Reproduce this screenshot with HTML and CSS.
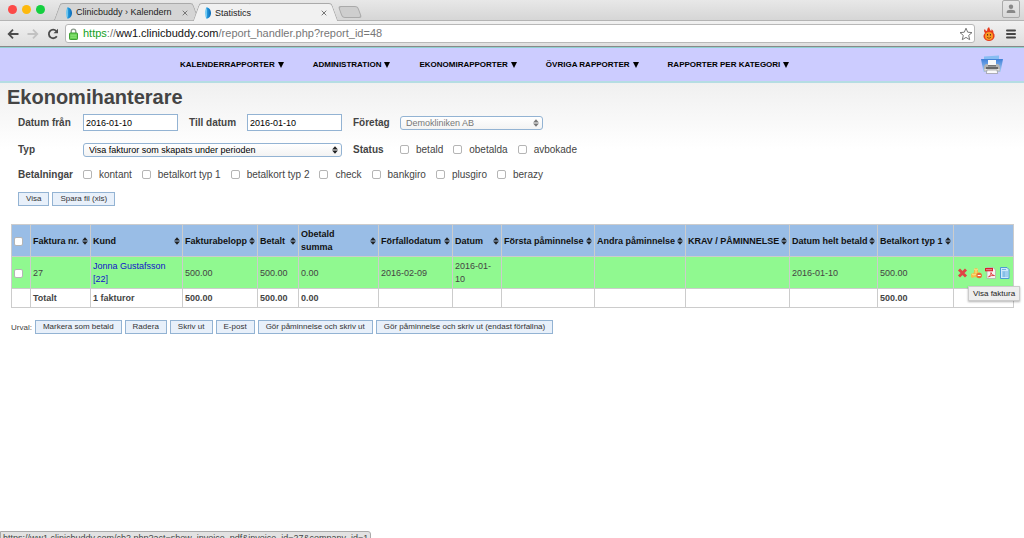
FILE: index.html
```html
<!DOCTYPE html>
<html lang="sv">
<head>
<meta charset="utf-8">
<title>Statistics</title>
<link rel="stylesheet" href="styles.css">
</head>
<body>
<svg class="defs" width="0" height="0" aria-hidden="true">
  <defs>
    <linearGradient id="drop" x1="0" x2="1"><stop offset="0" stop-color="#2aa9ea"/><stop offset="1" stop-color="#0a66b4"/></linearGradient>
    <linearGradient id="tray" x1="0" x2="0" y1="0" y2="1"><stop offset="0" stop-color="#3f80d8"/><stop offset="1" stop-color="#a9cdf5"/></linearGradient>
    <symbol id="brand" viewBox="0 0 6 12"><path d="M1 0.5C4 0 6 3 6 6S4 12 1 11.5C2 8 2 4 1 .5Z" fill="url(#drop)"/><path d="M1 1Q-.6 6 1 11Q2.600 6 1 1Z" fill="#5cc4f4"/></symbol>
    <symbol id="sort" viewBox="0 0 6 8"><path d="M3 .2L5.900 3.500H.1ZM3 7.800L.1 4.500H5.900Z" fill="#222"/></symbol>
  </defs>
</svg>
<header class="browser">
  <div class="tabstrip">
    <div class="lights"><span class="light red"></span><span class="light amber"></span><span class="light green"></span></div>
    <div class="tab"><svg class="favicon"><use href="#brand"/></svg><span class="tab-title">Clinicbuddy › Kalendern</span><button class="close" aria-label="Stäng flik"><svg viewBox="0 0 6 6"><path d="M.7.7l4.600 4.600M5.300.7L.7 5.300" stroke="#777"/></svg></button></div>
    <div class="tab active"><svg class="favicon"><use href="#brand"/></svg><span class="tab-title">Statistics</span><button class="close" aria-label="Stäng flik"><svg viewBox="0 0 6 6"><path d="M.7.7l4.600 4.600M5.300.7L.7 5.300" stroke="#777"/></svg></button></div>
    <button class="newtab" aria-label="Ny flik"></button>
    <button class="profile" aria-label="Profil"><svg viewBox="0 0 10 10"><circle cx="5" cy="2.800" r="2.200" fill="#888"/><path d="M.7 9V8Q.7 5.800 5 5.800T9.300 8V9Z" fill="#888"/></svg></button>
  </div>
  <div class="toolbar">
    <button class="tool" aria-label="Bakåt"><svg viewBox="0 0 12 12"><path d="M11.500 6H2M6 1.700L1.700 6L6 10.300" fill="none" stroke="#4c4c4c" stroke-width="1.800"/></svg></button>
    <button class="tool" aria-label="Framåt"><svg viewBox="0 0 12 12"><path d="M.5 6H10M6 1.700L10.300 6L6 10.300" fill="none" stroke="#c2c2c2" stroke-width="1.800"/></svg></button>
    <button class="tool" aria-label="Ladda om"><svg viewBox="0 0 12 12"><path d="M9.800 8.300A4.300 4.300 0 1 1 9.300 3" fill="none" stroke="#4c4c4c" stroke-width="1.800"/><path d="M11 .7V5.200H6.500Z" fill="#4c4c4c"/></svg></button>
    <div class="address">
      <svg class="lock" viewBox="0 0 9 12"><path d="M2.200 6V3.500a2.300 2.300 0 0 1 4.600 0V6" fill="none" stroke="#8b9a8b" stroke-width="1.300"/><rect x=".5" y="5" width="8" height="6.500" rx=".7" fill="#66d052" stroke="#3f9f35"/><path d="M1.500 7.200h6M1.500 9.200h6" stroke="#91e47f"/></svg>
      <span class="url"><span class="secure">https</span>://<span class="host">ww1.clinicbuddy.com</span>/report_handler.php?report_id=48</span>
      <button class="star" aria-label="Bokmärk"><svg viewBox="0 0 14 14"><path d="M7 1.200L8.700 5.200L13 5.600L9.700 8.400L10.700 12.700L7 10.400L3.300 12.700L4.300 8.400L1 5.600L5.300 5.200Z" fill="#fff" stroke="#777"/></svg></button>
    </div>
    <button class="ext" aria-label="Tillägg"><svg viewBox="0 0 12 14"><path d="M2 6Q0 3 2 2Q2 4 4 4Q4 1 6 0Q7 3 8 4Q9 3 8.500 2Q11 4 10.500 6Q12 7 11.500 10Q10 14 6 14T.5 10Q0 8 2 6Z" fill="#e73b1c"/><circle cx="6" cy="9" r="4" fill="#f99a22"/><path d="M4 10.300Q6 12.300 8 10.300" fill="none" stroke="#8a3a0a" stroke-width=".8"/><path d="M4.600 7v1.600M7.400 7v1.600" stroke="#522"/></svg></button>
    <button class="burger" aria-label="Meny"><svg viewBox="0 0 10 10"><path d="M1 1.500h8M1 5h8M1 8.500h8" stroke="#444" stroke-width="2" stroke-linecap="round"/></svg></button>
  </div>
</header>
<nav class="menu">
  <a href="#">KALENDERRAPPORTER <span class="caret"></span></a>
  <a href="#">ADMINISTRATION <span class="caret"></span></a>
  <a href="#">EKONOMIRAPPORTER <span class="caret"></span></a>
  <a href="#">ÖVRIGA RAPPORTER <span class="caret"></span></a>
  <a href="#">RAPPORTER PER KATEGORI <span class="caret"></span></a>
  <button class="print" aria-label="Skriv ut"><svg viewBox="0 0 22 20"><path d="M3 1.500L18 .5V6H3Z" fill="#87bdf2"/><path d="M0 4H22L19.500 17H2.500Z" fill="url(#tray)"/><path d="M7 5h8v6H7Z" fill="#f8f8f8"/><path d="M5 9h2v1.500h8V9h2q2 1 2 3.500v4H3v-4q0-2.500 2-3.500Z" fill="#b4b4b4"/><path d="M7 10h8v1.500H7Z" fill="#777"/><path d="M5 12h12v2.500H5Z" fill="#666"/><path d="M3.500 14h15v1.500h-15Z" fill="#ddd"/><path d="M6 15h10l.7 3.500H5.300Z" fill="#fafafa" stroke="#888" stroke-width=".6"/></svg></button>
</nav>
<main>
  <h1>Ekonomihanterare</h1>
  <form class="filters">
    <label class="name" for="from">Datum från</label>
    <input class="date" id="from" type="text" value="2016-01-10">
    <label class="name mid" for="to">Till datum</label>
    <input class="date" id="to" type="text" value="2016-01-10">
    <label class="name mid" for="company">Företag</label>
    <div class="pick company"><select id="company" disabled><option>Demokliniken AB</option></select><svg class="arrows"><use href="#sort"/></svg></div>
    <label class="name" for="type">Typ</label>
    <div class="pick type"><select id="type"><option>Visa fakturor som skapats under perioden</option></select><svg class="arrows"><use href="#sort"/></svg></div>
    <span class="name mid">Status</span>
    <div class="checks">
      <label><input type="checkbox">betald</label>
      <label><input type="checkbox">obetalda</label>
      <label><input type="checkbox">avbokade</label>
    </div>
    <span class="name">Betalningar</span>
    <div class="checks payments">
      <label><input type="checkbox">kontant</label>
      <label><input type="checkbox">betalkort typ 1</label>
      <label><input type="checkbox">betalkort typ 2</label>
      <label><input type="checkbox">check</label>
      <label><input type="checkbox">bankgiro</label>
      <label><input type="checkbox">plusgiro</label>
      <label><input type="checkbox">berazy</label>
    </div>
    <div class="submit"><button type="button" class="btn">Visa</button><button type="button" class="btn">Spara fil (xls)</button></div>
  </form>
  <table class="invoices">
    <colgroup><col class="c-check"><col class="c-nr"><col class="c-customer"><col class="c-amount"><col class="c-paid"><col class="c-unpaid"><col class="c-due"><col class="c-date"><col class="c-first"><col class="c-second"><col class="c-claim"><col class="c-settled"><col class="c-card"><col class="c-actions"></colgroup>
    <thead>
      <tr>
        <th><input type="checkbox" aria-label="Markera alla"></th>
        <th><div class="head">Faktura nr.<svg><use href="#sort"/></svg></div></th>
        <th><div class="head">Kund<svg><use href="#sort"/></svg></div></th>
        <th><div class="head">Fakturabelopp<svg><use href="#sort"/></svg></div></th>
        <th><div class="head">Betalt<svg><use href="#sort"/></svg></div></th>
        <th><div class="head">Obetald<br>summa<svg><use href="#sort"/></svg></div></th>
        <th><div class="head">Förfallodatum<svg><use href="#sort"/></svg></div></th>
        <th><div class="head">Datum<svg><use href="#sort"/></svg></div></th>
        <th><div class="head">Första påminnelse<svg><use href="#sort"/></svg></div></th>
        <th><div class="head">Andra påminnelse<svg><use href="#sort"/></svg></div></th>
        <th><div class="head">KRAV / PÅMINNELSE<svg><use href="#sort"/></svg></div></th>
        <th><div class="head">Datum helt betald<svg><use href="#sort"/></svg></div></th>
        <th><div class="head">Betalkort typ 1<svg><use href="#sort"/></svg></div></th>
        <th></th>
      </tr>
    </thead>
    <tbody>
      <tr class="paid">
        <td><input type="checkbox" aria-label="Markera faktura 27"></td>
        <td>27</td>
        <td><a href="#">Jonna Gustafsson [22]</a></td>
        <td>500.00</td><td>500.00</td><td>0.00</td><td>2016-02-09</td><td>2016-01-10</td>
        <td></td><td></td><td></td><td>2016-01-10</td><td>500.00</td>
        <td>
          <div class="actions">
            <button aria-label="Radera"><svg viewBox="0 0 11 12"><path d="M2 2.500l7 7M9 2.500L2 9.500" stroke="#df4444" stroke-width="2.900"/></svg></button>
            <button aria-label="Kreditera"><svg viewBox="0 0 11 12"><path d="M3 2l2-1 2 1v3l3 1v4l-3 1-3-1-3 1-1-1V7l3-1.500Z" fill="#f0c04a"/><path d="M3 2l2 1 2-1M5 3v3M1 7l2 1 2-1" fill="none" stroke="#fbe28e"/><circle cx="8.200" cy="8.500" r="2.700" fill="#ea6a35"/><path d="M6.700 8.500h3" stroke="#fff"/></svg></button>
            <button aria-label="PDF"><svg viewBox="0 0 11 12"><path d="M2 .5h6l2.500 2.500v8.500H2Z" fill="#f6f2f2" stroke="#aaa" stroke-width=".7"/><path d="M0 1h8v3.300H0Z" fill="#d7222c"/><path d="M1.500 2.700h1M3.500 2.700h1M5.500 2.700h1" stroke="#fff"/><path d="M3.500 10Q6.500 8 6 5.500Q6.500 8.500 9.500 8.500Q6 8 3.500 10Z" fill="none" stroke="#dd3b3b" stroke-width=".9"/></svg></button>
            <button aria-label="Visa faktura"><svg viewBox="0 0 11 12"><path d="M1.500.5h6.500l2 2v9h-8.500Z" fill="#cfe8fb" stroke="#4c9bd4"/><path d="M3 2.500h4M3 5h6M3 7h6M3 9h6M5 4.500v5.500" stroke="#5aa7dc" stroke-width=".8"/></svg></button>
            <div class="tooltip" role="tooltip">Visa faktura</div>
          </div>
        </td>
      </tr>
    </tbody>
    <tfoot>
      <tr><td></td><td>Totalt</td><td>1 fakturor</td><td>500.00</td><td>500.00</td><td>0.00</td><td></td><td></td><td></td><td></td><td></td><td></td><td>500.00</td><td></td></tr>
    </tfoot>
  </table>
  <div class="bulk">
    <span>Urval:</span>
    <button class="btn">Markera som betald</button>
    <button class="btn">Radera</button>
    <button class="btn">Skriv ut</button>
    <button class="btn">E-post</button>
    <button class="btn">Gör påminnelse och skriv ut</button>
    <button class="btn">Gör påminnelse och skriv ut (endast förfallna)</button>
  </div>
</main>
<div class="status">https://ww1.clinicbuddy.com/cb2.php?act=show_invoice_pdf&amp;invoice_id=27&amp;company_id=1</div>
</body>
</html>
```
FILE: styles.css
```css
* { box-sizing: border-box; }
html { height: 100%; overflow: hidden; }
body {
  margin: 0;
  font: 9px/13px "Liberation Sans", Arial, sans-serif;
  color: #444;
  background: #fff;
}
button { font: inherit; color: inherit; margin: 0; padding: 0; border: 0; background: none; }
button svg { display: block; width: 100%; height: 100%; }
.defs { position: absolute; }

/* Browser frame */
.tabstrip {
  display: flex;
  align-items: flex-end;
  height: 21px;
  padding: 0 4px 0 8px;
  background: linear-gradient(#e8e8e8, #d6d6d6);
  border-bottom: 1px solid #b4b4b4;
}
.lights { display: flex; gap: 5px; width: 49px; padding-bottom: 6px; }
.light { width: 9px; height: 9px; border-radius: 50%; }
.red { background: #fc4a48; }
.amber { background: #fdb90d; }
.green { background: #14cf3f; }
.tab {
  position: relative;
  z-index: 0;
  display: flex;
  align-items: center;
  width: 139px;
  height: 17px;
  padding: 2px 8px 0 9px;
  font-size: 9px;
  color: #222;
}
.tab::before, .tab::after {
  content: "";
  position: absolute;
  z-index: -1;
  top: 0;
  bottom: 0;
  background: #d5d5d5;
  border-top: 1px solid #aaa;
}
.tab::before { left: 0; right: 50%; border-left: 1px solid #aaa; border-radius: 3px 0 0 0; transform: skewX(-20deg); }
.tab::after { left: 40%; right: 0; border-right: 1px solid #aaa; border-radius: 0 3px 0 0; transform: skewX(20deg); }
.active { z-index: 1; height: 18px; margin-bottom: -1px; }
.active::before, .active::after { background: #f1f1f1; }
.favicon { width: 6px; height: 12px; margin-right: 4px; }
.tab-title { flex: 1; white-space: nowrap; }
.close { width: 6px; height: 6px; }
.newtab {
  width: 20px;
  height: 12px;
  margin: 0 0 2px 5px;
  background: #cecece;
  border: 1px solid #aaa;
  border-radius: 3px;
  transform: skewX(20deg);
}
.profile { width: 18px; height: 18px; margin: 0 0 2px auto; padding: 3px; border: 1px solid #aaa; border-radius: 2px; }
.toolbar {
  display: flex;
  align-items: center;
  gap: 8px;
  height: 26px;
  padding: 0 8px 0 7px;
  background: linear-gradient(#f1f1f1, #dedede);
  border-bottom: 1px solid #888;
}
.tool { width: 12px; height: 12px; }
.address {
  display: flex;
  align-items: center;
  flex: 1;
  height: 19px;
  padding: 0 1px 0 3px;
  margin-left: -2px;
  background: #fff;
  border: 1px solid #b8b8b8;
  border-radius: 3px;
}
.lock { width: 9px; height: 12px; margin-right: 5px; }
.url { flex: 1; font-size: 11px; color: #777; }
.secure { color: #12a01c; }
.host { color: #111; }
.star { width: 14px; height: 14px; }
.ext { width: 12px; height: 14px; }
.burger { width: 10px; height: 10px; margin-left: 3px; }

/* Report menu */
.menu {
  display: flex;
  align-items: center;
  gap: 29px;
  height: 36px;
  padding: 0 21px 0 180px;
  background: #ccf;
  border-top: 1px solid #8fd0cf;
  border-bottom: 2px solid #b5dde3;
}
.menu a {
  display: flex;
  align-items: center;
  gap: 3px;
  font-size: 8px;
  font-weight: bold;
  color: #000;
  text-decoration: none;
  white-space: nowrap;
}
.caret { border: 3px solid transparent; border-top: 6px solid #000; border-bottom: 0; }
.print { width: 22px; height: 20px; margin-left: auto; }

/* Report */
main { padding: 3px 11px 0; background: linear-gradient(#f0f0f0, #fff 66px); }
h1 { margin: 0 0 6px -4px; font-size: 20px; line-height: 22px; color: #444; }
.filters {
  display: grid;
  grid-template-columns: 65px 95px 69px 95px 58px 1fr;
  grid-template-rows: 17px 15px 13px 14px;
  row-gap: 11px;
  align-items: center;
  padding-left: 7px;
  font-size: 10px;
}
.name { font-weight: bold; }
.mid { padding-left: 11px; }
.date {
  width: 100%;
  height: 17px;
  padding: 0 2px;
  font: 9px "Liberation Sans", Arial, sans-serif;
  color: #000;
  background: #fff;
  border: 1px solid #93b3d3;
}
.pick { position: relative; }
.company { width: 143px; }
.type { grid-column: 2 / 5; }
select {
  display: block;
  width: 100%;
  height: 14px;
  padding: 0 14px 0 5px;
  appearance: none;
  font: 9px "Liberation Sans", Arial, sans-serif;
  color: #000;
  background: linear-gradient(#fff, #f3f3f3);
  border: 1px solid #93b3d3;
  border-radius: 3px;
}
select:disabled { color: #777; opacity: 1; }
select:disabled + .arrows { opacity: 0.6; }
.arrows { position: absolute; top: 3px; right: 4px; width: 6px; height: 8px; pointer-events: none; }
.checks { display: flex; gap: 10px; }
.payments { grid-column: 2 / -1; }
.checks label { display: flex; align-items: center; gap: 7px; white-space: nowrap; }
input[type="checkbox"] {
  flex: none;
  display: block;
  width: 9px;
  height: 9px;
  margin: 0;
  appearance: none;
  background: #fff;
  border: 1px solid #b5b5b5;
  border-radius: 2px;
}
.submit { grid-column: 1 / -1; display: flex; gap: 3px; }
.btn {
  height: 14px;
  padding: 0 7px;
  font-size: 8px;
  line-height: 12px;
  color: #333;
  white-space: nowrap;
  background: #e8f0fa;
  border: 1px solid #93b3d3;
}

/* Invoice table */
.invoices {
  width: 100%;
  margin-top: 18px;
  table-layout: fixed;
  border-collapse: collapse;
}
.c-check { width: 19px; }
.c-nr { width: 60px; }
.c-customer { width: 92px; }
.c-amount { width: 75px; }
.c-paid { width: 41px; }
.c-unpaid { width: 80px; }
.c-due { width: 74px; }
.c-date { width: 49px; }
.c-first { width: 93px; }
.c-second { width: 91px; }
.c-claim { width: 104px; }
.c-settled { width: 88px; }
.c-card { width: 76px; }
.c-actions { width: 60px; }
.invoices th, .invoices td { padding: 3px 2px 2px; border: 1px solid #ccc; text-align: left; }
.invoices th { color: #111; background: #99bde6; }
.head { display: flex; align-items: center; justify-content: space-between; white-space: nowrap; }
.head svg { flex: none; width: 6px; height: 8px; }
.paid td { background: #90f990; }
.paid a { color: #11c; text-decoration: none; }
tfoot { font-weight: bold; }
.actions { position: relative; display: flex; justify-content: center; gap: 3px; }
.actions button { width: 11px; height: 12px; }
.tooltip {
  position: absolute;
  top: 19px;
  left: 12px;
  padding: 0 4px;
  font-size: 8px;
  white-space: nowrap;
  color: #222;
  background: #eee;
  border: 1px solid #ccc;
  box-shadow: 0 1px 2px rgba(0, 0, 0, 0.3);
}
.bulk { display: flex; align-items: center; gap: 3px; margin-top: 12px; font-size: 8px; }

.status {
  position: fixed;
  left: 0;
  bottom: -8px;
  padding: 0 2px;
  color: #444;
  background: #e2e2e2;
  border: 1px solid #aaa;
  border-radius: 0 3px 0 0;
}
```
